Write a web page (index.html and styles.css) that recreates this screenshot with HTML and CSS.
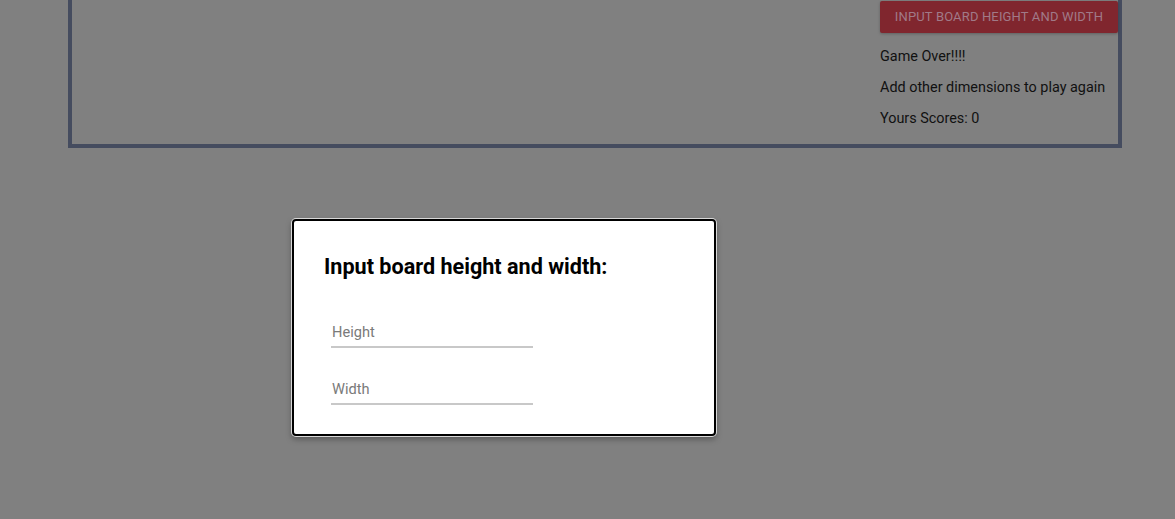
FILE: index.html
```
<!DOCTYPE html>
<html>
<head>
<meta charset="utf-8">
<link rel="stylesheet" href="styles.css">
</head>
<body>
<div class="page">
  <div class="board">
    <div class="side">
      <button class="btn">INPUT BOARD HEIGHT AND WIDTH</button>
      <p class="line">Game Over!!!!</p>
      <p class="line">Add other dimensions to play again</p>
      <p class="line">Yours Scores: 0</p>
    </div>
  </div>
</div>
<div class="dialog">
  <h2 class="title">Input board height and width:</h2>
  <div class="field"><input class="inp" type="text" placeholder="Height"></div>
  <div class="field"><input class="inp" type="text" placeholder="Width"></div>
</div>
</body>
</html>
```
FILE: styles.css
```
html, body {
  margin: 0;
  padding: 0;
  background: #808080;
  height: 100%;
  font-family: Roboto, "Liberation Sans", sans-serif;
}
.page {
  padding-left: 68px;
  width: 1054px;
}
.board {
  border: 4px solid #454c5f;
  border-top: 0;
  height: 148px;
  box-sizing: border-box;
  display: flex;
  justify-content: flex-end;
}
.side {
  width: 238px;
  padding-top: 1px;
}
.btn {
  display: block;
  width: 238px;
  height: 32px;
  border: 0;
  border-radius: 2px;
  background: #80262e;
  color: #a07a88;
  font-family: Roboto, "Liberation Sans", sans-serif;
  font-size: 13px;
  letter-spacing: 0.15px;
  box-shadow: 0 1px 3px rgba(0,0,0,0.25);
  padding: 0 0 2px 0;
}
.line {
  margin: 0;
  height: 31px;
  line-height: 31px;
  font-size: 14.4px;
  color: #111;
}
.line:first-of-type {
  margin-top: 8px;
}
.dialog {
  position: absolute;
  left: 292px;
  top: 219px;
  width: 424px;
  height: 217px;
  box-sizing: border-box;
  background: #fff;
  border: 2px solid #000;
  border-radius: 4px;
  box-shadow: 0 0 0 1px #d8d8d8, 0 3px 6px rgba(0,0,0,0.35);
  padding: 32px 30px 0 30px;
}
.title {
  margin: 0;
  font-size: 21.6px;
  font-weight: 700;
  color: #000;
  line-height: 28px;
}
.field {
  margin-left: 7px;
  margin-top: 37px;
  width: 202px;
}
.field + .field {
  margin-top: 27px;
}
.inp {
  display: block;
  width: 100%;
  box-sizing: border-box;
  border: 0;
  border-bottom: 2px solid #c8c8c8;
  outline: none;
  padding: 0 0 1px 1px;
  height: 30px;
  font-family: Roboto, "Liberation Sans", sans-serif;
  font-size: 14.6px;
  background: transparent;
}
.inp::placeholder {
  color: #7a7a7a;
}
```
